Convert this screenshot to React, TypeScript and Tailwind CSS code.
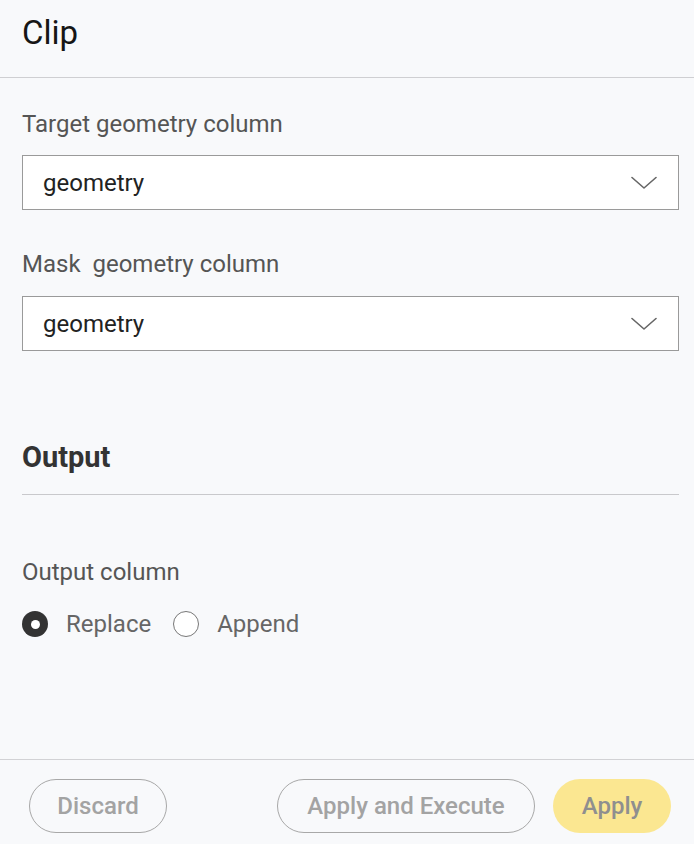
import React, { useState } from 'react';

const FONT = { fontFamily: 'Roboto, "Liberation Sans", sans-serif' };

function Chevron() {
  return (
    <svg width="26" height="14" viewBox="0 0 26 14" fill="none">
      <path d="M1 1.5 L13 12 L25 1.5" stroke="#666" strokeWidth="1.6" strokeLinecap="round" strokeLinejoin="round" />
    </svg>
  );
}

function SelectBox({ value }: { value: string }) {
  return (
    <div className="h-[55px] bg-white border border-[#9a9a9a] flex items-center justify-between pl-[20px] pr-[21px]">
      <span className="text-[24px] leading-[28px] text-[#222]">{value}</span>
      <Chevron />
    </div>
  );
}

function Radio({ checked, label, onClick }: { checked: boolean; label: string; onClick: () => void }) {
  return (
    <button onClick={onClick} className="flex items-center gap-[18px]">
      {checked ? (
        <span className="w-[26px] h-[26px] rounded-full bg-[#333] flex items-center justify-center">
          <span className="w-[9px] h-[9px] rounded-full bg-white" />
        </span>
      ) : (
        <span className="w-[26px] h-[26px] rounded-full bg-white border-[1.5px] border-[#777]" />
      )}
      <span className="text-[24px] leading-[28px] text-[#666]">{label}</span>
    </button>
  );
}

export default function App() {
  const [mode, setMode] = useState<'replace' | 'append'>('replace');

  return (
    <div style={FONT} className="w-[694px] h-[844px] bg-[#f8f9fb] flex flex-col">
      {/* header */}
      <div className="h-[78px] border-b-[1.5px] border-[#cfcfd2] px-[22px] flex items-start pt-[14px]">
        <h1 className="text-[33px] leading-[38px] text-[#161616]">Clip</h1>
      </div>

      {/* body */}
      <div className="flex-1 flex flex-col px-[22px] pr-[15px]">
        <label className="mt-[32px] text-[24px] leading-[28px] text-[#555]">Target geometry column</label>
        <div className="mt-[17px]">
          <SelectBox value="geometry" />
        </div>

        <label className="mt-[40px] text-[24px] leading-[28px] text-[#555] whitespace-pre">Mask  geometry column</label>
        <div className="mt-[18px]">
          <SelectBox value="geometry" />
        </div>

        <h2 className="mt-[88px] text-[29px] leading-[36px] font-bold text-[#333]">Output</h2>
        <div className="mt-[19px] border-t border-[#c9c9cc]" />

        <label className="mt-[63px] text-[24px] leading-[28px] text-[#555]">Output column</label>
        <div className="mt-[24px] flex items-center gap-[22px]">
          <Radio checked={mode === 'replace'} label="Replace" onClick={() => setMode('replace')} />
          <Radio checked={mode === 'append'} label="Append" onClick={() => setMode('append')} />
        </div>
      </div>

      {/* footer */}
      <div className="h-[85px] border-t-[1.5px] border-[#d2d2d5] flex items-start justify-between pl-[29px] pr-[23px] pt-[19px]">
        <button className="w-[138px] h-[54px] rounded-full border border-[#a8a8a8] text-[24px] font-medium text-[#a3a3a3]">
          Discard
        </button>
        <div className="flex gap-[18px]">
          <button className="w-[258px] h-[54px] rounded-full border border-[#a8a8a8] text-[24px] font-medium text-[#a3a3a3]">
            Apply and Execute
          </button>
          <button className="w-[118px] h-[54px] rounded-full bg-[#fbe791] text-[24px] font-medium text-[#8f8f8f]">
            Apply
          </button>
        </div>
      </div>
    </div>
  );
}
